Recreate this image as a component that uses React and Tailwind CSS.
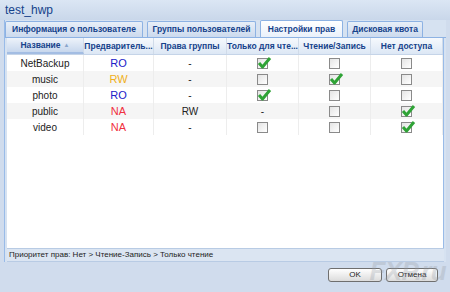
import React from 'react';

const rows = [
  { name: 'NetBackup', pre: 'RO', group: '-', ro: true, rw: false, na: false },
  { name: 'music', pre: 'RW', group: '-', ro: false, rw: true, na: false },
  { name: 'photo', pre: 'RO', group: '-', ro: true, rw: false, na: false },
  { name: 'public', pre: 'NA', group: 'RW', ro: null, rw: false, na: true },
  { name: 'video', pre: 'NA', group: '-', ro: false, rw: false, na: true },
];

const preColor = { RO: 'text-[#2020c8]', RW: 'text-[#f0b020]', NA: 'text-[#f03040]' };

function Check({ on }) {
  return (
    <span className="relative inline-block w-[11px] h-[11px] border border-[#8a8a8a] bg-gradient-to-br from-[#e4e4e4] to-white">
      {on && (
        <svg className="absolute -top-[3px] -left-[1px]" width="15" height="14" viewBox="0 0 15 14">
          <path d="M2 7 L5.5 11 L13 2" fill="none" stroke="#2fa336" strokeWidth="3" strokeLinejoin="round" />
        </svg>
      )}
    </span>
  );
}

export default function App() {
  const cols = ['w-[77px]', 'w-[70px]', 'w-[73px]', 'w-[72px]', 'w-[72px]', 'w-[72px]'];
  const heads = ['Название', 'Предваритель...', 'Права группы', 'Только для чте...', 'Чтение/Запись', 'Нет доступа'];
  const tabs = [
    { t: 'Информация о пользователе', w: 'w-[138px]' },
    { t: 'Группы пользователей', w: 'w-[109px]' },
    { t: 'Настройки прав', w: 'w-[83px]' },
    { t: 'Дисковая квота', w: 'w-[76px]' },
  ];

  return (
    <div className="relative w-[450px] h-[292px] overflow-hidden bg-[#d0dced] font-['Liberation_Sans',sans-serif] text-[10px] whitespace-nowrap">
      {/* title */}
      <div className="h-[20px] px-[5px] flex items-center bg-gradient-to-b from-[#dbe6f4] to-[#c9d7ea] text-[12px] text-[#15428b]">
        test_hwp
      </div>

      <div className="mx-[4px] border-l border-[#99bbe8] bg-[#d6e2f1]">
        {/* tabs */}
        <div className="flex items-end gap-[4px] pl-[0px] h-[18px] border-b border-[#8db2e3]">
          {tabs.map((t, i) => (
            <div
              key={t.t}
              className={
                t.w +
                ' flex items-center justify-center font-bold text-[8.5px] text-[#15428b] border border-b-0 border-[#8db2e3] rounded-t-[2px] ' +
                (i === 2
                  ? 'h-[17px] bg-gradient-to-b from-white to-[#eaf1fb]'
                  : 'h-[16px] bg-gradient-to-b from-[#e8eff8] to-[#ccdaee]')
              }
            >
              {t.t}
            </div>
          ))}
        </div>

        {/* grid */}
        <div className="mx-[2px] bg-white border-r border-[#99bbe8]">
          <div className="flex h-[17px] bg-gradient-to-b from-[#f6f9fd] to-[#dce7f5] border-b border-[#c5d4e8]">
            {heads.map((h, i) => (
              <div
                key={h}
                className={
                  cols[i] +
                  ' flex items-center justify-center border-r border-[#d0dbe9] text-[8.5px] text-[#15428b] font-bold ' +
                  (i === 0 ? 'bg-gradient-to-b from-[#eef3fa] to-[#c7d7ed] border-b-2 border-b-[#a3bde3]' : '')
                }
              >
                {h}
                {i === 0 && <span className="ml-[3px] text-[6px] text-[#8aa5cc]">▲</span>}
              </div>
            ))}
          </div>
          <div className="h-[193px]">
            {rows.map((r, i) => (
              <div key={r.name} className={'flex h-[16px] text-[10px] text-[#222] ' + (i % 2 ? 'bg-[#f5f5f5]' : 'bg-white')}>
                <div className={cols[0] + ' flex items-center justify-center border-r border-[#ededed]'}>{r.name}</div>
                <div className={cols[1] + ' flex items-center justify-center border-r border-[#ededed] text-[11px] ' + preColor[r.pre]}>{r.pre}</div>
                <div className={cols[2] + ' flex items-center justify-center border-r border-[#ededed]'}>{r.group}</div>
                <div className={cols[3] + ' flex items-center justify-center border-r border-[#ededed]'}>
                  {r.ro === null ? '-' : <Check on={r.ro} />}
                </div>
                <div className={cols[4] + ' flex items-center justify-center border-r border-[#ededed]'}>
                  <Check on={r.rw} />
                </div>
                <div className={cols[5] + ' flex items-center justify-center border-r border-[#ededed]'}>
                  <Check on={r.na} />
                </div>
              </div>
            ))}
          </div>
        </div>

        {/* status */}
        <div className="h-[14px] mx-[2px] flex items-center px-[2px] text-[8px] text-[#222] bg-[#dbe5f2] border-t border-[#b8cbe4] border-b border-b-[#b8cbe4]">
          Приоритет прав: Нет &gt; Чтение-Запись &gt; Только чтение
        </div>
      </div>

      {/* buttons */}
      <div className="flex justify-end gap-[4px] pr-[12px] pt-[6px]">
        <button className="w-[54px] h-[14px] rounded-[3px] border border-[#6f6f6f] bg-gradient-to-b from-white to-[#dcdcdc] text-[8px] text-[#222] leading-none">
          OK
        </button>
        <button className="w-[52px] h-[14px] rounded-[3px] border border-[#6f6f6f] bg-gradient-to-b from-white to-[#dcdcdc] text-[8px] text-[#222] leading-none">
          Отмена
        </button>
      </div>

      {/* watermark */}
      <div className="absolute right-[4px] bottom-[1px] text-[26px] font-bold italic text-[#9aa0a8] opacity-30 tracking-tight pointer-events-none">
        FXP.ru
      </div>
    </div>
  );
}
